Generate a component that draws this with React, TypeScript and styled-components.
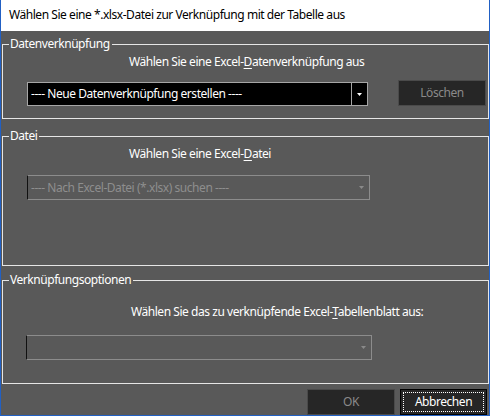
import React from 'react'
import styled, {createGlobalStyle} from 'styled-components'

const GlobalStyle = createGlobalStyle`
  html, body {
    margin: 0;
    padding: 0;
    background: #ffffff;
  }
  body {
    font-family: "Noto Sans", "Open Sans", sans-serif;
    font-size: 12px;
    letter-spacing: -0.45px;
  }
`

const Window = styled.div`
  box-sizing: border-box;
  width: 490px;
  height: 416px;
  display: flex;
  flex-direction: column;
  border: 1px solid #2160c4;
  border-top: none;
`

const TitleBar = styled.div`
  height: 31px;
  flex: none;
  display: flex;
  align-items: center;
  padding-left: 8px;
  padding-bottom: 1px;
  box-sizing: border-box;
  background: #ffffff;
  color: #000000;
  line-height: 16px;
`

const Body = styled.div`
  flex: 1;
  display: flex;
  flex-direction: column;
  background: #595959;
  padding-top: 5px;
`

const Group = styled.fieldset<{$height: number; $gap?: number}>`
  box-sizing: border-box;
  height: ${p => p.$height}px;
  margin: ${p => p.$gap ?? 0}px 0 0 1px;
  padding: 0;
  border: 1px solid #e6e6e6;
  display: flex;
  flex-direction: column;
  min-width: 0;
`

const Legend = styled.legend`
  margin-left: 6px;
  padding: 0 2px 0 1px;
  color: #ffffff;
  line-height: 16px;
`

const Label = styled.div<{$left: number; $top: number}>`
  padding-left: ${p => p.$left}px;
  margin-top: ${p => p.$top}px;
  color: #ffffff;
  line-height: 16px;
  white-space: nowrap;

  u {
    text-underline-offset: 2px;
  }
`

const Row = styled.div<{$top: number}>`
  display: flex;
  align-items: flex-end;
  margin-top: ${p => p.$top}px;
`

const Combo = styled.div<{$left: number; $top?: number; $width: number; $height: number; $disabled?: boolean}>`
  box-sizing: border-box;
  display: flex;
  align-items: stretch;
  margin-left: ${p => p.$left}px;
  margin-top: ${p => p.$top ?? 0}px;
  width: ${p => p.$width}px;
  height: ${p => p.$height}px;
  border: 1px solid ${p => (p.$disabled ? '#8c8c8c' : '#a6a6a6')};
  border-left-color: ${p => (p.$disabled ? '#111111' : '#a6a6a6')};
  background: ${p => (p.$disabled ? '#595959' : '#000000')};
  color: ${p => (p.$disabled ? '#8e8e8e' : '#ffffff')};
`

const ComboText = styled.div`
  flex: 1;
  display: flex;
  align-items: center;
  padding-left: 3px;
  line-height: 16px;
  white-space: nowrap;
  overflow: hidden;
`

const DropButton = styled.div<{$framed?: boolean}>`
  width: 15px;
  display: flex;
  align-items: center;
  justify-content: center;
  border-left: 1px solid ${p => (p.$framed ? '#a6a6a6' : 'transparent')};
`

const Button = styled.div<{$width: number; $left?: number; $focused?: boolean; $disabled?: boolean}>`
  box-sizing: border-box;
  width: ${p => p.$width}px;
  height: 26px;
  margin-left: ${p => p.$left ?? 0}px;
  display: flex;
  align-items: center;
  justify-content: center;
  background: #262626;
  border: 1px solid ${p => (p.$focused ? '#000000' : '#4a4a4a')};
  color: ${p => (p.$disabled ? '#8a8a8a' : '#ffffff')};
  line-height: 16px;
  padding: 2px;
`

const FocusRect = styled.div`
  box-sizing: border-box;
  width: 100%;
  height: 100%;
  border: 1px dotted #ffffff;
  display: flex;
  align-items: center;
  justify-content: center;
`

const Footer = styled.div`
  display: flex;
  justify-content: flex-end;
  margin-top: 5px;
  padding-right: 2px;
`

function Arrow({color}: {color: string}) {
  return (
    <svg width="5" height="3" viewBox="0 0 5 3">
      <path d="M0 0H5L2.5 3Z" fill={color}/>
    </svg>
  )
}

export default function App() {
  return (
    <>
      <GlobalStyle/>
      <Window>
        <TitleBar>Wählen Sie eine *.xlsx-Datei zur Verknüpfung mit der Tabelle aus</TitleBar>
        <Body>
          <Group $height={83}>
            <Legend>Datenverknüpfung</Legend>
            <Label $left={126} $top={2}>Wählen Sie eine Excel-<u>D</u>atenverknüpfung aus</Label>
            <Row $top={10}>
              <Combo $left={24} $width={341} $height={24}>
                <ComboText>---- Neue Datenverknüpfung erstellen ----</ComboText>
                <DropButton $framed><Arrow color='#ffffff'/></DropButton>
              </Combo>
              <Button $width={88} $left={30} $disabled>Löschen</Button>
            </Row>
          </Group>

          <Group $height={138} $gap={9}>
            <Legend>Datei</Legend>
            <Label $left={126} $top={2}>Wählen Sie eine Excel-<u>D</u>atei</Label>
            <Combo $left={24} $top={13} $width={343} $height={25} $disabled>
              <ComboText>---- Nach Excel-Datei (*.xlsx) suchen ----</ComboText>
              <DropButton><Arrow color='#8a8a8a'/></DropButton>
            </Combo>
          </Group>

          <Group $height={112} $gap={6}>
            <Legend>Verknüpfungsoptionen</Legend>
            <Label $left={128} $top={16}>Wählen Sie das zu verknüpfende Excel-<u>T</u>abellenblatt aus:</Label>
            <Combo $left={23} $top={15} $width={346} $height={25} $disabled>
              <ComboText/>
              <DropButton><Arrow color='#8a8a8a'/></DropButton>
            </Combo>
          </Group>

          <Footer>
            <Button $width={88} $disabled>OK</Button>
            <Button $width={87} $left={5} $focused>
              <FocusRect>Abbrechen</FocusRect>
            </Button>
          </Footer>
        </Body>
      </Window>
    </>
  )
}
